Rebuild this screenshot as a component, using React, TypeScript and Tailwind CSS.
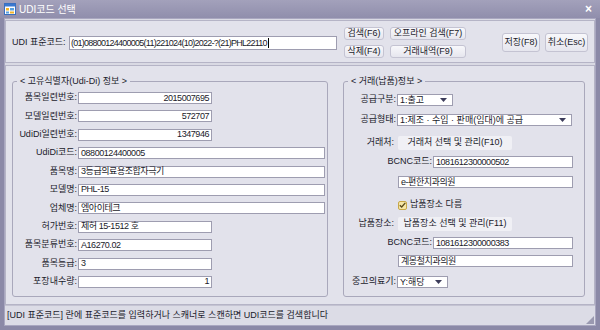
import React from "react";

const txt =
  "font-['Liberation_Sans','Noto_Sans_CJK_KR',sans-serif] text-[9px] text-[#1a1a2a]";

function Field({ value, w, right }: { value: string; w: string; right?: boolean }) {
  return (
    <div
      className={`${w} h-[12px] bg-white border border-[#9e9db0] flex items-center px-[2px] leading-none whitespace-nowrap tracking-[-0.45px] ${
        right ? "justify-end" : ""
      }`}
    >
      {value}
    </div>
  );
}

function Select({ value, w }: { value: string; w: string }) {
  return (
    <div className={`${w} h-[12px] bg-white border border-[#9e9db0] flex items-center justify-between px-[2px] leading-none whitespace-nowrap`}>
      <span>{value}</span>
      <svg width="7" height="4" viewBox="0 0 7 4" className="mr-[3px]">
        <path d="M0 0h7L3.5 4z" fill="#3c3c5a" />
      </svg>
    </div>
  );
}

function Btn({ label, cls }: { label: string; cls: string }) {
  return (
    <div
      className={`${cls} flex items-center justify-center rounded-[3px] border border-[#c4c3d2] bg-gradient-to-b from-[#f8f8fb] to-[#e6e6ee] leading-none whitespace-nowrap`}
    >
      {label}
    </div>
  );
}

const leftRows: { label: string; value: string; wide?: boolean; right?: boolean }[] = [
  { label: "품목일련번호:", value: "2015007695", right: true },
  { label: "모델일련번호:", value: "572707", right: true },
  { label: "UdiDi일련번호:", value: "1347946", right: true },
  { label: "UdiDi코드:", value: "08800124400005", wide: true },
  { label: "품목명:", value: "3등급의료용조합자극기", wide: true },
  { label: "모델명:", value: "PHL-15", wide: true },
  { label: "업체명:", value: "엠아이테크", wide: true },
  { label: "허가번호:", value: "제허 15-1512 호" },
  { label: "품목분류번호:", value: "A16270.02" },
  { label: "품목등급:", value: "3" },
  { label: "포장내수량:", value: "1", right: true },
];

export default function App() {
  return (
    <div className={`${txt} w-[600px] h-[330px] bg-[#8b89a7] flex flex-col overflow-hidden`}>
      {/* Title bar */}
      <div className="h-[18px] flex items-center px-[4px] bg-gradient-to-b from-[#a3a1bb] to-[#908eac]">
        <svg width="12" height="12" viewBox="0 0 12 12">
          <rect x="0.5" y="0.5" width="11" height="11" fill="#fff" stroke="#3a6fc0" />
          <rect x="1" y="1" width="10" height="2.5" fill="#3a78d0" />
          <rect x="2" y="5" width="3" height="2.5" fill="#f2b32a" />
          <rect x="6" y="5" width="4" height="2.5" fill="#58a0e0" />
          <rect x="2" y="8.5" width="3" height="2" fill="#58a0e0" />
          <rect x="6" y="8.5" width="4" height="2" fill="#f2b32a" />
        </svg>
        <span className="ml-[3px] text-white text-[10px]">UDI코드 선택</span>
        <span className="ml-auto mr-[4px] text-white text-[12px] font-bold leading-none">×</span>
      </div>

      {/* Body */}
      <div className="mx-[4px] mb-[4px] flex-1 bg-[#d9d9e3] border border-[#a9a7c0] flex flex-col">
        {/* Top panel */}
        <div className="mt-[1px] h-[43px] bg-[#e2e2eb] border border-[#b5b4c6] flex items-start">
          <div className="w-[63px] pl-[6px] mt-[15px] h-[14px] flex items-center whitespace-nowrap">UDI 표준코드:</div>
          <div className="mt-[15px] w-[268px] h-[14px] bg-white border border-[#9e9db0] flex items-center px-[1px] leading-none whitespace-nowrap tracking-[-0.75px]">
            (01)08800124400005(11)221024(10)2022-?(21)PHL22110
            <span className="ml-[1px] w-px h-[10px] bg-black" />
          </div>
          <div className="ml-[7px] mt-[6px] grid grid-cols-[40px_76px] grid-rows-[13px_13px] gap-x-[6px] gap-y-[5px]">
            <Btn label="검색(F6)" cls="" />
            <Btn label="오프라인 검색(F7)" cls="" />
            <Btn label="삭제(F4)" cls="" />
            <Btn label="거래내역(F9)" cls="" />
          </div>
          <div className="ml-[36px] mt-[12px] flex gap-[5px]">
            <Btn label="저장(F8)" cls="w-[38px] h-[19px]" />
            <Btn label="취소(Esc)" cls="w-[43px] h-[19px]" />
          </div>
        </div>

        {/* Middle panel */}
        <div className="mt-[2px] h-[240px] bg-[#e2e2eb] border border-[#b5b4c6] flex items-start pt-[9px] pl-[6px]">
          {/* Left group */}
          <fieldset className="w-[316px] h-[222px] border border-[#a9a8bb] rounded-[3px] pb-[9px]">
            <legend className="ml-[4px] px-[3px] leading-[12px]">{"< 고유식별자(Udi-Di) 정보 >"}</legend>
            <div className="flex flex-col gap-[6.4px] pt-[5px]">
              {leftRows.map((r) => (
                <div key={r.label} className="flex items-center h-[12px]">
                  <div className="w-[65px] text-right pr-[1px] whitespace-nowrap">{r.label}</div>
                  <Field value={r.value} w={r.wide ? "w-[247px]" : "w-[134px]"} right={r.right} />
                </div>
              ))}
            </div>
          </fieldset>

          {/* Right group */}
          <fieldset className="ml-[15px] w-[242px] h-[222px] border border-[#a9a8bb] rounded-[3px]">
            <legend className="ml-[4px] px-[3px] leading-[12px]">{"< 거래(납품)정보 >"}</legend>
            <div className="flex flex-col">
              <div className="mt-[7px] flex items-center h-[12px]">
                <div className="w-[53px] text-right pr-[1px] whitespace-nowrap">공급구분:</div>
                <Select value="1:출고" w="w-[56px]" />
              </div>
              <div className="mt-[8px] flex items-center h-[12px]">
                <div className="w-[53px] text-right pr-[1px] whitespace-nowrap">공급형태:</div>
                <Select value="1:제조 · 수입 · 판매(임대)에 공급" w="w-[175px]" />
              </div>
              <div className="mt-[10px] flex items-center h-[14px]">
                <div className="w-[54px] text-right pr-[4px] whitespace-nowrap">거래처:</div>
                <div className="w-[114px] h-[14px] flex items-center justify-center bg-[#f0f0f5] rounded-[2px] whitespace-nowrap">
                  거래처 선택 및 관리(F10)
                </div>
              </div>
              <div className="mt-[6px] flex items-center h-[12px]">
                <div className="w-[89px] text-right pr-[1px] whitespace-nowrap">BCNC코드:</div>
                <Field value="1081612300000502" w="w-[140px]" />
              </div>
              <div className="mt-[8px] flex items-center h-[12px] pl-[54px]">
                <Field value="e-편한치과의원" w="w-[175px]" />
              </div>
              <div className="mt-[12px] flex items-center h-[10px] pl-[54px]">
                <div className="w-[9px] h-[9px] rounded-[2px] border border-[#c8a848] bg-[#f6e6a8] flex items-center justify-center">
                  <svg width="7" height="6" viewBox="0 0 7 6">
                    <path d="M0.8 3.2L2.7 5L6.3 0.8" fill="none" stroke="#5a4a1a" strokeWidth="1.3" />
                  </svg>
                </div>
                <span className="ml-[3px]">납품장소 다름</span>
              </div>
              <div className="mt-[7px] flex items-center h-[14px]">
                <div className="w-[54px] text-right pr-[4px] whitespace-nowrap">납품장소:</div>
                <div className="w-[114px] h-[14px] flex items-center justify-center bg-[#f0f0f5] rounded-[2px] whitespace-nowrap">
                  납품장소 선택 및 관리(F11)
                </div>
              </div>
              <div className="mt-[6px] flex items-center h-[12px]">
                <div className="w-[89px] text-right pr-[1px] whitespace-nowrap">BCNC코드:</div>
                <Field value="1081612300000383" w="w-[140px]" />
              </div>
              <div className="mt-[6px] flex items-center h-[12px] pl-[54px]">
                <Field value="계몽철치과의원" w="w-[175px]" />
              </div>
              <div className="mt-[9px] flex items-center h-[12px]">
                <div className="w-[53px] text-right pr-[1px] whitespace-nowrap">중고의료기:</div>
                <Select value="Y:해당" w="w-[51px]" />
              </div>
            </div>
          </fieldset>
        </div>

        {/* Status bar */}
        <div className="flex-1 flex items-center justify-between pl-[2px] border-t border-[#c4c3d2] bg-[#dcdce6]">
          <span className="whitespace-nowrap">[UDI 표준코드] 란에 표준코드를 입력하거나 스캐너로 스캔하면 UDI코드를 검색합니다</span>
          <svg width="8" height="8" viewBox="0 0 8 8" className="self-end mb-[1px] mr-[1px]">
            <path d="M8 0L0 8h8z" fill="#9a99b0" />
          </svg>
        </div>
      </div>
    </div>
  );
}
